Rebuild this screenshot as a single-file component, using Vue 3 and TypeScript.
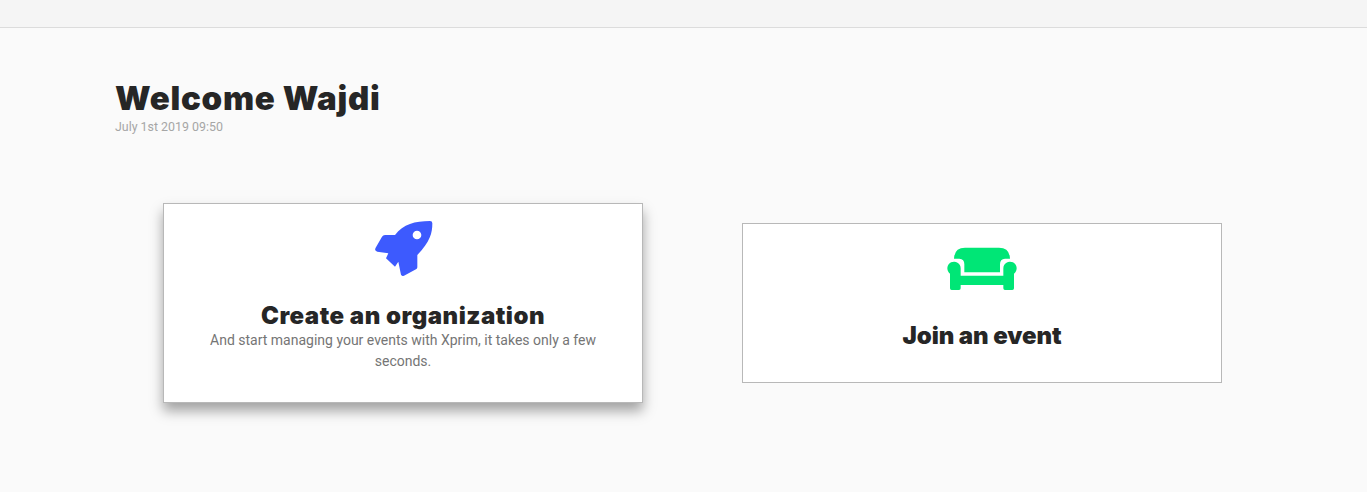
<template>
  <div class="topbar"></div>
  <main class="page">
    <header class="welcome">
      <h1>Welcome {{ userName }}</h1>
      <p>{{ date }}</p>
    </header>
    <section class="choices">
      <div class="card card-active">
        <svg class="rocket" width="60" height="60" viewBox="39 27 180 180">
          <path
            fill="#3d5afe"
            fill-rule="evenodd"
            d="M210 33 Q217 33 217 40 C217 70 210 95 172 135 L172 172 Q172 176 168 178 L132 197 Q122 201 122 190 L115 155 L105 170 L78 145 L85 130 L52 125 Q42 123 47 113 L66 80 Q69 75 75 75 L105 75 C130 42 165 33 210 33 Z M171 62 A13 13 0 1 0 171 88 A13 13 0 1 0 171 62 Z"
          />
        </svg>
        <h2>Create an organization</h2>
        <p>And start managing your events with Xprim, it takes only a few seconds.</p>
      </div>
      <div class="card card-small">
        <svg class="sofa" width="72" height="46" viewBox="33 33 216 138">
          <path
            fill="#00e676"
            d="M88 112 L88 88 Q88 72 73 71 L57 71 Q58 38 90 38 L192 38 Q224 38 225 71 L210 71 Q195 72 195 88 L195 112 Z"
          />
          <path
            fill="#00e676"
            d="M77 122 L205 122 L205 100 A20 20 0 1 1 237 116 L237 160 Q237 165 232 165 L210 165 Q205 165 205 160 L205 150 L77 150 L77 160 Q77 165 72 165 L50 165 Q45 165 45 160 L45 116 A20 20 0 1 1 77 100 Z"
          />
        </svg>
        <h2>Join an event</h2>
      </div>
    </section>
  </main>
</template>

<script setup lang="ts">
const userName = "Wajdi";
const date = "July 1st 2019 09:50";
</script>

<style>
html,
body {
  height: 100%;
  background: #fafafa;
}
</style>

<style scoped>
.topbar {
  height: 27px;
  background: #f5f5f5;
  border-bottom: 1px solid #dcdcdc;
}

.page {
  box-sizing: border-box;
  min-height: 464px;
  padding: 50px 145px 0 115px;
}

.welcome h1 {
  margin: 0;
  font-family: Inter, sans-serif;
  font-weight: 900;
  font-size: 33px;
  line-height: 40px;
  letter-spacing: 0.7px;
  color: #262626;
}

.welcome p {
  margin: 2px 0 0;
  font-family: Roboto, sans-serif;
  font-size: 12.4px;
  line-height: 14px;
  color: #a6a6a6;
}

.choices {
  display: flex;
  align-items: center;
  justify-content: space-between;
  margin-top: 69px;
  padding-left: 48px;
}

.card {
  box-sizing: border-box;
  width: 480px;
  height: 200px;
  display: flex;
  flex-direction: column;
  align-items: center;
  padding: 15px 40px 0;
  background: #fff;
  border: 1px solid #b8b8b8;
  text-align: center;
}

.card-active {
  box-shadow: 0 8px 12px rgba(0, 0, 0, 0.35);
}

.card-small {
  height: 160px;
  padding-top: 22px;
}

.card h2 {
  margin: 0;
  font-family: Inter, sans-serif;
  font-weight: 900;
  font-size: 24px;
  line-height: 28px;
  color: #262626;
}

.card-active h2 {
  letter-spacing: 0.5px;
}

.card-small h2 {
  letter-spacing: -0.1px;
}

.rocket {
  margin-bottom: 23px;
}

.sofa {
  margin-bottom: 30px;
}

.card p {
  margin: 0;
  font-family: Roboto, sans-serif;
  font-size: 14px;
  line-height: 21px;
  color: #757575;
}
</style>
